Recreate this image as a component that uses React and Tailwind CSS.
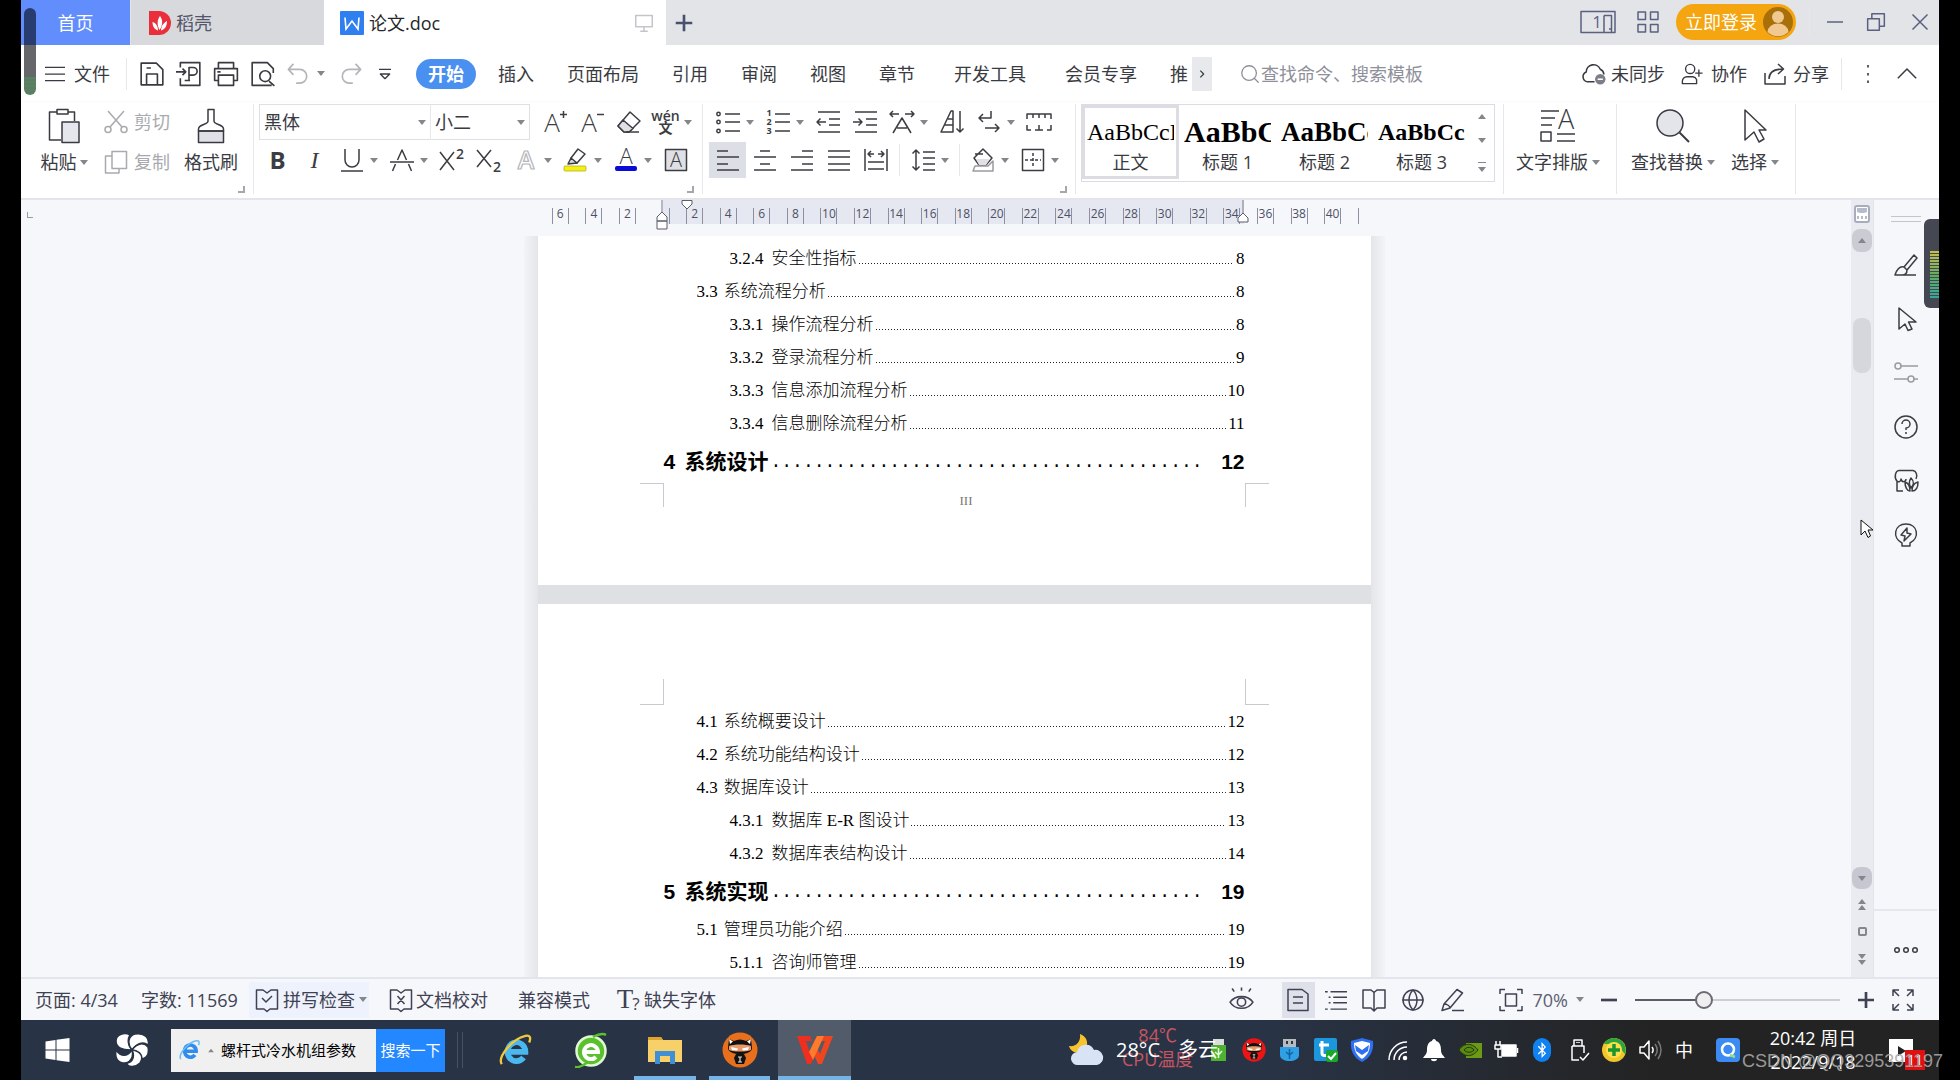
import { Globe, Search } from "lucide-react";
import { FaBluetoothB } from "react-icons/fa";

const menuTabs = [
  { label: "插入" },
  { label: "页面布局" },
  { label: "引用" },
  { label: "审阅" },
  { label: "视图" },
  { label: "章节" },
  { label: "开发工具", wide: true },
  { label: "会员专享", wide: true },
];

const pageOne = [
  { level: 3, no: "3.2.4", title: "安全性指标", page: "8" },
  { level: 2, no: "3.3", title: "系统流程分析", page: "8" },
  { level: 3, no: "3.3.1", title: "操作流程分析", page: "8" },
  { level: 3, no: "3.3.2", title: "登录流程分析", page: "9" },
  { level: 3, no: "3.3.3", title: "信息添加流程分析", page: "10" },
  { level: 3, no: "3.3.4", title: "信息删除流程分析", page: "11" },
  { level: 1, no: "4", title: "系统设计", page: "12" },
];

const pageTwo = [
  { level: 2, no: "4.1", title: "系统概要设计", page: "12" },
  { level: 2, no: "4.2", title: "系统功能结构设计", page: "12" },
  { level: 2, no: "4.3", title: "数据库设计", page: "13" },
  { level: 3, no: "4.3.1", title: "数据库 E-R 图设计", page: "13" },
  { level: 3, no: "4.3.2", title: "数据库表结构设计", page: "14" },
  { level: 1, no: "5", title: "系统实现", page: "19" },
  { level: 2, no: "5.1", title: "管理员功能介绍", page: "19" },
  { level: 3, no: "5.1.1", title: "咨询师管理", page: "19" },
];

const rulerMarks = [6, 4, 2, 0, 2, 4, 6, 8, 10, 12, 14, 16, 18, 20, 22, 24, 26, 28, 30, 32, 34, 36, 38, 40];

const styleItems = [
  { name: "正文", sample: "AaBbCcD", look: "text-2xl", active: true },
  { name: "标题 1", sample: "AaBbC", look: "text-[30px] font-bold" },
  { name: "标题 2", sample: "AaBbCc", look: "text-[27px] font-bold" },
  { name: "标题 3", sample: "AaBbCcD", look: "text-2xl font-bold" },
];

function Svg({ className = "w-6 h-6", box = "0 0 24 24", children }) {
  return (
    <svg
      viewBox={box}
      className={`shrink-0 overflow-visible ${className}`}
      fill="none"
      stroke="currentColor"
      strokeWidth="1.5"
      strokeLinejoin="round"
      aria-hidden="true"
    >
      {children}
    </svg>
  );
}

function Glyph({ x = 12, y = 20, size = 22, children, ...rest }) {
  return (
    <text
      x={x}
      y={y}
      fontSize={size}
      textAnchor="middle"
      fill="currentColor"
      stroke="none"
      fontFamily="Open Sans, sans-serif"
      fontWeight="300"
      {...rest}
    >
      {children}
    </text>
  );
}

function Caret({ up = false, className = "" }) {
  return (
    <svg viewBox="0 0 8 5" className={`w-2 h-[5px] shrink-0 fill-[#85868c] ${className}`} aria-hidden="true">
      <path d={up ? "M0 5L4 0L8 5Z" : "M0 0H8L4 5Z"} />
    </svg>
  );
}

function Tool({ label, caret, active, dim, children }) {
  return (
    <div className={`flex items-center h-9 ${dim ? "text-[#a9aaae]" : "text-[#3c3d42]"}`}>
      <button aria-label={label} className={`w-[37px] h-9 flex items-center justify-center ${active ? "bg-[#dcdfe6]" : ""}`}>
        {children}
      </button>
      {caret && (
        <span className="w-[13px] flex justify-start">
          <Caret />
        </span>
      )}
    </div>
  );
}

function Sep({ className = "h-8" }) {
  return <span className={`w-px bg-[#e6e7ea] shrink-0 ${className}`} />;
}

function Corner() {
  return <span className="self-end mb-[5px] w-[7px] h-[7px] border-r-2 border-b-2 border-[#a5a7ad] shrink-0" />;
}

function TitleBar() {
  return (
    <header className="h-[45px] shrink-0 bg-[#e2e4e8] flex items-stretch">
      <button className="w-[109px] bg-[#628dfc] text-white text-lg">首页</button>
      <button className="w-[193px] ml-px bg-[#d8d9dd] flex items-center gap-[5px] pl-[18px] text-lg text-[#53556b]">
        <svg viewBox="0 0 22 24" className="w-[22px] h-6" aria-hidden="true">
          <path d="M0 0H10A12 12 0 0 1 10 24H0Z" fill="#ea2e3c" />
          <path
            d="M11 5C14 9 14 14 10.500 19C8 14 8 9 11 5ZM3.500 11C7 12 9 15 9 19.500C5.500 18.500 3.500 15 3.500 11ZM18 10C18 15 16 18.500 12 19.500C12 15 14.500 12 18 10Z"
            fill="#fff"
          />
        </svg>
        稻壳
      </button>
      <button className="w-[342px] bg-white flex items-center pl-4 text-lg text-[#26272b]">
        <svg viewBox="0 0 24 24" className="w-6 h-6 mr-[5px]" aria-hidden="true">
          <rect width="24" height="24" rx="1" fill="#2f7ff0" />
          <path d="M5 6.500L6 18L12 10L18 18L19 6.500" fill="none" stroke="#fff" strokeWidth="1.600" />
        </svg>
        论文.doc
        <Svg className="w-[18px] h-[18px] ml-auto mr-[13px] text-[#c3c5ca]">
          <path d="M1 2H23V17H1ZM12 17V22M7 23H17" strokeWidth="2" />
        </Svg>
      </button>
      <button aria-label="新建标签" className="w-[35px] flex items-center justify-center text-[#47506d]">
        <Svg className="w-[18px] h-[18px]">
          <path d="M12 1V23M1 12H23" strokeWidth="3.500" />
        </Svg>
      </button>

      <div className="ml-auto flex items-center text-[#5b6080] pr-[10px] pb-[2px]">
        <button aria-label="工作区" className="mr-5">
          <Svg box="0 0 36 24" className="w-9 h-6">
            <path d="M1 1.500H35V22.500H1ZM24 5.500H31.500V22M24 5.500V22.500M29 19H31" />
            <Glyph x={17} y={18} size={16} fontWeight="400">1</Glyph>
          </Svg>
        </button>
        <button aria-label="应用" className="mr-4">
          <Svg className="w-6 h-6">
            <path d="M2 2H9.500V9.500H2ZM14.500 2H22V9.500H14.500ZM2 14.500H9.500V22H2ZM14.500 14.500H22V22H14.500Z" />
          </Svg>
        </button>
        <button className="h-9 w-[120px] rounded-full bg-[#f4a50f] text-white text-lg flex items-center justify-between pl-[9px] pr-[3px]">
          立即登录
          <svg viewBox="0 0 30 30" className="w-[30px] h-[30px]" aria-hidden="true">
            <circle cx="15" cy="15" r="15" fill="#a96f08" />
            <circle cx="15" cy="10" r="6" fill="#f0c890" />
            <path d="M4.500 25A10.500 8.500 0 0 1 25.500 25A15 15 0 0 1 4.500 25Z" fill="#f0c890" />
          </svg>
        </button>
        <Sep className="h-7 ml-[13px] mr-[17px] bg-[#d2d4da]" />
        <button aria-label="最小化" className="w-4 mr-[23px]">
          <Svg className="w-4 h-4"><path d="M0 12H24" strokeWidth="2.200" /></Svg>
        </button>
        <button aria-label="还原" className="mr-[25px]">
          <Svg className="w-5 h-5"><path d="M2 8H16V22H2ZM7 8V2H22V17H16" strokeWidth="1.800" /></Svg>
        </button>
        <button aria-label="关闭">
          <Svg className="w-[18px] h-[18px]"><path d="M2 2L22 22M22 2L2 22" strokeWidth="2" /></Svg>
        </button>
      </div>
    </header>
  );
}

function MenuBar() {
  return (
    <nav className="h-[57px] shrink-0 flex items-center text-lg text-[#3a3b42] pl-[23px] pr-[22px] whitespace-nowrap">
      <button className="flex items-center gap-2">
        <Svg className="w-[22px] h-5"><path d="M0 4H24M0 12H24M0 20H24" /></Svg>
        文件
      </button>
      <Sep className="ml-4 mr-3 h-8" />
      <div className="flex items-center gap-[11px]">
        <button aria-label="保存">
          <Svg className="w-[26px] h-[26px]">
            <path d="M2 2H16L22 8V22H2ZM7 22V12H17V22M7 6.500H11" />
          </Svg>
        </button>
        <button aria-label="输出为PDF">
          <Svg className="w-[26px] h-[26px]">
            <path d="M4 6V1.500H22V22.500H4V16M0 10H9M6 7L9 10L6 13M12 18V6H16A3.500 3.500 0 0 1 16 13H12M8 18H13" />
          </Svg>
        </button>
        <button aria-label="打印">
          <Svg className="w-[26px] h-[26px]">
            <path d="M5 7V1.500H19V7M5 18H1.500V7H22.500V18H19M5 13H19V22.500H5ZM4 10H7" />
          </Svg>
        </button>
        <button aria-label="打印预览">
          <Svg className="w-[26px] h-[26px]">
            <path d="M20 22.500H2V1.500H16L21.500 7V11M17.500 18.500L22.500 23" />
            <circle cx="14" cy="14" r="5" />
          </Svg>
        </button>
        <button aria-label="撤销" className="flex items-center gap-2 text-[#b4b5ba]">
          <Svg className="w-[22px] h-[22px]"><path d="M7 1L1.500 7L7 13M1.500 7H14A7.500 7.500 0 0 1 14 22H10" strokeWidth="1.800" /></Svg>
          <Caret />
        </button>
        <button aria-label="恢复" className="text-[#b4b5ba] ml-1">
          <Svg className="w-[22px] h-[22px]"><path d="M17 1L22.500 7L17 13M22.500 7H10A7.500 7.500 0 0 0 10 22H14" strokeWidth="1.800" /></Svg>
        </button>
        <button aria-label="自定义快速访问工具栏" className="ml-1">
          <Svg className="w-4 h-4"><path d="M3 5H21M5 12L12 19L19 12Z" strokeWidth="2" /></Svg>
        </button>
      </div>
      <button className="ml-[23px] mr-[22px] h-[30px] w-[60px] rounded-full bg-[#4a90f0] text-white font-bold">开始</button>
      <div className="flex items-center gap-[33px]">
        {menuTabs.map((tab) => (
          <button key={tab.label} className={tab.wide ? "ml-[6px]" : ""}>
            {tab.label}
          </button>
        ))}
        <div className="flex items-center">
          <span className="w-[22px]">推</span>
          <button aria-label="更多选项卡" className="w-5 h-[34px] bg-[#e8e9ec] flex items-center justify-center shrink-0">
            <Svg className="w-[10px] h-[10px]"><path d="M8 4L16 12L8 20" strokeWidth="3" /></Svg>
          </button>
        </div>
      </div>
      <label className="flex items-center ml-[27px] text-[#8e909a]">
        <Search className="w-[22px] h-[22px]" strokeWidth={1.4} />
        <input
          aria-label="查找命令"
          placeholder="查找命令、搜索模板"
          className="w-[200px] outline-none placeholder:text-[#8e909a]"
        />
      </label>
      <div className="ml-auto flex items-center">
        <button className="flex items-center gap-[5px] mr-4">
          <Svg className="w-[25px] h-[25px]">
            <path d="M13 20H6A5 5 0 0 1 5 10.500A7 7 0 0 1 18.500 8A6 6 0 0 1 22 13" />
            <circle cx="18.500" cy="17.500" r="5" fill="#7d7f88" stroke="none" />
            <path d="M16 17.500H21" stroke="#fff" />
          </Svg>
          未同步
        </button>
        <button className="flex items-center gap-2 mr-4">
          <Svg className="w-[22px] h-[22px]">
            <circle cx="10" cy="6.500" r="5" />
            <path d="M17 22.500H1.500V20A5 5 0 0 1 6.500 15H13A5 5 0 0 1 17 18ZM19.500 7V15M15.500 11H23.500" />
          </Svg>
          协作
        </button>
        <button className="flex items-center gap-[6px]">
          <Svg className="w-6 h-6">
            <path d="M2 11V22H22V14M6 17C6 10 11 7 20 7M15 2L20.500 7L15 12" />
          </Svg>
          分享
        </button>
        <Sep className="ml-3 h-8" />
        <button aria-label="更多" className="ml-6">
          <svg viewBox="0 0 4 18" className="w-1 h-[18px] fill-[#5b5d66]" aria-hidden="true">
            <path d="M1 0H3V2.500H1ZM1 8H3V10.500H1ZM1 15.500H3V18H1Z" />
          </svg>
        </button>
        <button aria-label="折叠功能区" className="ml-[27px]">
          <Svg className="w-5 h-5"><path d="M1 17L12 6L23 17" strokeWidth="1.800" /></Svg>
        </button>
      </div>
    </nav>
  );
}

function ParagraphGroup() {
  return (
    <section className="flex flex-col gap-[2px] pl-[6px]">
      <div className="flex">
        <Tool label="项目符号" caret>
          <Svg className="w-6 h-6">
            <circle cx="2.500" cy="4" r="1.700" /><circle cx="2.500" cy="12" r="1.700" /><circle cx="2.500" cy="21" r="1.700" />
            <path d="M9 4H24M9 12H24M9 21H24" />
          </Svg>
        </Tool>
        <Tool label="编号" caret>
          <Svg className="w-6 h-6">
            <path d="M9 4H24M9 12H24M9 21H24" />
            <Glyph x={3} y={6} size={9} fontWeight="700">1</Glyph>
            <Glyph x={3} y={15} size={9} fontWeight="700">2</Glyph>
            <Glyph x={3} y={24} size={9} fontWeight="700">3</Glyph>
          </Svg>
        </Tool>
        <Tool label="减少缩进量">
          <Svg><path d="M2 2H24M13 9H24M13 15H24M2 22H24M10 12H1M4.500 8.500L1 12L4.500 15.500" /></Svg>
        </Tool>
        <Tool label="增加缩进量">
          <Svg><path d="M2 2H24M13 9H24M13 15H24M2 22H24M0 12H9M5.500 8.500L9 12L5.500 15.500" /></Svg>
        </Tool>
        <Tool label="字符缩放" caret>
          <Svg><path d="M0 4H9M3 1L0 4L3 7M15 4H24M21 1L24 4L21 7M3 23L12 8L21 23M7 18H17" /></Svg>
        </Tool>
        <Tool label="排序">
          <Svg><path d="M13 1V22H1L11 1ZM8 9H13M5 15H13M20 1V22M16.500 18.500L20 22L23.500 18.500" /></Svg>
        </Tool>
        <Tool label="段落标记" caret>
          <Svg><path d="M14 1V8H2M6 4L2 8L6 12M8 18H22M18 14L22 18L18 22" /></Svg>
        </Tool>
        <Tool label="制表位">
          <Svg className="w-7 h-6" box="0 0 28 24"><path d="M2 9V4H26V9M8 4V8M14 4V8M20 4V8M2 15V20H6M26 15V20H22M10 20H18M14 15V20" /></Svg>
        </Tool>
      </div>
      <div className="flex items-center">
        <Tool label="左对齐" active>
          <Svg><path d="M1 3H12M1 9H23M1 16H12M1 22H23" /></Svg>
        </Tool>
        <Tool label="居中对齐">
          <Svg><path d="M7 3H17M1 9H23M7 16H17M1 22H23" /></Svg>
        </Tool>
        <Tool label="右对齐">
          <Svg><path d="M12 3H23M1 9H23M12 16H23M1 22H23" /></Svg>
        </Tool>
        <Tool label="两端对齐">
          <Svg><path d="M1 3H23M1 9H23M1 16H23M1 22H23" /></Svg>
        </Tool>
        <Tool label="分散对齐">
          <Svg><path d="M1 1V23M23 1V23M4 6H10M7 3L4 6L7 9M14 6H20M17 3L20 6L17 9M4 14H20M4 21H20" /></Svg>
        </Tool>
        <div className="w-[10px] flex justify-center"><Sep /></div>
        <Tool label="行距" caret>
          <Svg><path d="M5 2V22M1.500 5.500L5 2L8.500 5.500M1.500 18.500L5 22L8.500 18.500M12 4H24M12 10H24M12 16H24M12 22H24" /></Svg>
        </Tool>
        <div className="w-[10px] flex justify-center"><Sep /></div>
        <Tool label="底纹颜色" caret>
          <Svg><path d="M12 1L21 10L15 17H8L3 10ZM4 6H12" /><path d="M5 11L19 11L15 17H8Z" fill="#e4dfe2" stroke="none" /><path d="M4 18H17L22 13V23H2Z" stroke="#9a9ba0" /></Svg>
        </Tool>
        <Tool label="边框" caret>
          <Svg><path d="M1.500 1.500H22.500V22.500H1.500Z" /><path d="M12 5V20M4 12H20" strokeDasharray="3 2" /></Svg>
        </Tool>
      </div>
    </section>
  );
}

function Ribbon() {
  return (
    <div className="h-[98px] shrink-0 flex items-start text-lg text-[#3a3b42] border-b-2 border-[#e4e5ea] pt-[2px] whitespace-nowrap shadow-sm">
      <section className="flex pl-[19px] h-full">
        <button className="flex flex-col items-center pt-1 w-[48px]">
          <Svg className="w-8 h-9" box="0 0 32 36">
            <path d="M9 4H1.500V32H13M20 4H26.500V13M9 1.500H20V6H9Z" />
            <path d="M14 14H31V34.500H14Z" fill="#e6e7ec" />
          </Svg>
          <span className="flex items-center gap-[3px] mt-1 leading-7">粘贴<Caret /></span>
        </button>
        <div className="flex flex-col gap-1 pl-4 text-[#a9aaae]">
          <button className="flex items-center gap-[6px] h-9">
            <Svg className="w-6 h-6">
              <path d="M4 1L18 17M20 1L6 17" />
              <circle cx="4" cy="19.500" r="3" /><circle cx="20" cy="19.500" r="3" />
            </Svg>
            剪切
          </button>
          <button className="flex items-center gap-[6px] h-9">
            <Svg className="w-6 h-6">
              <path d="M8 6H1.500V23H15V19" /><path d="M8 1.500H22.500V18.500H8Z" />
            </Svg>
            复制
          </button>
        </div>
        <button className="flex flex-col items-center pt-1 ml-[14px]">
          <Svg className="w-7 h-9" box="0 0 28 36">
            <path d="M1.500 23H26.500V34.500H1.500Z" fill="#e0e1e6" />
            <path d="M11 1.500H17V13C17 17 26.500 16 26.500 21V23H1.500V21C1.500 16 11 17 11 13Z" />
          </Svg>
          <span className="mt-1 leading-7">格式刷</span>
        </button>
        <Corner />
      </section>
      <Sep className="h-[90px] ml-2" />

      <section className="flex flex-col gap-[2px] pl-[5px]">
        <div className="flex items-center">
          <div className="flex border border-[#dfe0e4] w-[271px] h-9 items-center mr-[6px]">
            <select aria-label="字体" className="appearance-none w-[164px] pl-1 outline-none">
              <option>黑体</option>
            </select>
            <Caret className="-ml-[6px] mr-[4px]" />
            <Sep className="h-9" />
            <select aria-label="字号" className="appearance-none w-[88px] pl-[4px] outline-none">
              <option>小二</option>
            </select>
            <Caret className="-ml-[2px]" />
          </div>
          <Tool label="增大字号">
            <Svg><Glyph x={9} y={22} size={26}>A</Glyph><path d="M17 4.500H24M20.500 1V8" /></Svg>
          </Tool>
          <Tool label="减小字号">
            <Svg><Glyph x={9} y={22} size={26}>A</Glyph><path d="M17 4.500H24" /></Svg>
          </Tool>
          <Tool label="清除格式">
            <Svg><path d="M13 2L23 11L12 22H7L1 16Z" /><path d="M6 10L16 18.500L12 22H7L1 16Z" fill="#dfe0e4" /><path d="M9 22H22" /></Svg>
          </Tool>
          <Tool label="拼音指南" caret>
            <span className="flex flex-col items-center leading-3 font-semibold">
              <span className="text-sm leading-3">wén</span>
              <span className="text-sm leading-3">文</span>
            </span>
          </Tool>
        </div>
        <div className="flex items-center">
          <Tool label="加粗"><span className="text-2xl font-bold">B</span></Tool>
          <Tool label="倾斜"><span className="font-['Liberation_Serif'] italic text-2xl">I</span></Tool>
          <Tool label="下划线" caret>
            <Svg><path d="M5 1V12A7 7 0 0 0 19 12V1M1 23H23" /></Svg>
          </Tool>
          <Tool label="删除线" caret>
            <Svg><path d="M7.500 12L12 2L16.500 12M5.500 16L2.500 23M18.500 16L21.500 23M0 14H24" /></Svg>
          </Tool>
          <Tool label="上标">
            <Svg><path d="M0 4L14 22M14 4L0 22" /><Glyph x={20} y={11} size={14} fontWeight="600">2</Glyph></Svg>
          </Tool>
          <Tool label="下标">
            <Svg><path d="M0 2L14 19M14 2L0 19" /><Glyph x={20} y={24} size={14} fontWeight="600">2</Glyph></Svg>
          </Tool>
          <Tool label="文字效果" caret dim>
            <Svg><Glyph size={25} y={21} fill="#fff" stroke="#b4b5ba" strokeWidth="1.200" fontWeight="600">A</Glyph></Svg>
          </Tool>
          <Tool label="突出显示" caret>
            <Svg className="w-[26px] h-6"><path d="M14 1L21 6L13 15H7V10Z" /><path d="M7 10L13 15L4 16Z" fill="#d8d9de" /><rect y="18" width="22" height="5" rx="1" fill="#f4f014" stroke="#aaa814" strokeWidth="0.700" /></Svg>
          </Tool>
          <Tool label="字体颜色" caret>
            <Svg><Glyph size={22} y={16}>A</Glyph><rect x="1" y="18" width="22" height="5" rx="2" fill="#0b0bd8" stroke="none" /></Svg>
          </Tool>
          <Tool label="字符底纹">
            <Svg><path d="M1.500 1.500H22.500V22.500H1.500Z" fill="#dfe0e5" /><Glyph size={20} y={19}>A</Glyph></Svg>
          </Tool>
        </div>
      </section>
      <div className="flex h-full -ml-[10px]"><Corner /></div>
      <Sep className="h-[90px] ml-2" />

      <ParagraphGroup />
      <div className="flex h-full -ml-1"><Corner /></div>
      <Sep className="h-[90px] ml-2" />

      <section className="ml-[5px] flex border border-[#dcdde2] h-[78px]">
        {styleItems.map((item) => (
          <button
            key={item.name}
            className={`w-[97px] h-[74px] flex flex-col items-center justify-end px-[2px] overflow-hidden ${
              item.active ? "border-[3px] border-[#dcdde2]" : "border-[3px] border-transparent"
            }`}
          >
            <span className={`w-full h-8 leading-8 overflow-hidden text-left font-['Liberation_Serif'] text-black ${item.look}`}>
              {item.sample}
            </span>
            <span className="leading-7">{item.name}</span>
          </button>
        ))}
        <div className="w-6 flex flex-col items-center justify-around">
          <button aria-label="上一行样式"><Caret up /></button>
          <button aria-label="下一行样式"><Caret /></button>
          <button aria-label="更多样式" className="flex flex-col items-center gap-1">
            <span className="w-2 h-px bg-[#85868c]" />
            <Caret />
          </button>
        </div>
      </section>
      <Sep className="h-[90px] ml-2" />

      <button className="flex flex-col items-center pt-1 ml-3">
        <Svg className="w-9 h-9" box="0 0 36 36">
          <path d="M1 3H19M1 10H15M1 17H12M1 24H11V33H1ZM17 26H35M17 33H35" />
          <Glyph x={26} y={21} size={27}>A</Glyph>
        </Svg>
        <span className="flex items-center gap-1 mt-1 leading-7">文字排版<Caret /></span>
      </button>
      <Sep className="h-[90px] ml-4" />
      <button className="flex flex-col items-center pt-1 ml-[14px]">
        <Svg className="w-9 h-9" box="0 0 36 36">
          <circle cx="15" cy="15" r="13" fill="#e4e5ea" />
          <path d="M24.500 24.500L34 34" strokeWidth="2" />
        </Svg>
        <span className="flex items-center gap-1 mt-1 leading-7">查找替换<Caret /></span>
      </button>
      <button className="flex flex-col items-center pt-1 ml-4">
        <Svg className="w-8 h-9" box="0 0 32 36">
          <path d="M6 2L27 22H20L25 31L20 34L15 24L6 32Z" />
        </Svg>
        <span className="flex items-center gap-1 mt-1 leading-7">选择<Caret /></span>
      </button>
      <Sep className="h-[90px] ml-4" />
    </div>
  );
}

function TocLine({ level, no, title, page }) {
  if (level === 1) {
    return (
      <li className="h-[43px] flex items-center text-[21px] font-bold">
        <a href="#toc" className="flex items-center w-full">
          <span className="w-[21px] font-['Liberation_Sans']">{no}</span>
          <span>{title}</span>
          <span className="flex-1 w-0 overflow-hidden whitespace-nowrap ml-[2px] mr-3 font-['Liberation_Mono'] text-lg leading-7 font-normal">
            {".".repeat(40)}
          </span>
          <span className="font-['Liberation_Sans']">{page}</span>
        </a>
      </li>
    );
  }
  return (
    <li className={`h-[33px] flex items-center ${level === 2 ? "pl-[33px]" : "pl-[66px]"}`}>
      <a href="#toc" className={`flex items-center w-full ${level === 2 ? "gap-[6px]" : "gap-2"}`}>
        <span>{no}</span>
        <span className="flex-1 flex items-center">
          <span className="mr-[2px]">{title}</span>
          <span className="flex-1 h-[11px]">
            <span className="block h-full bg-[repeating-linear-gradient(to_right,#222_0px,#222_1px,transparent_1px,transparent_3px)] bg-no-repeat bg-bottom bg-[length:100%_1px]" />
          </span>
          <span className="ml-[2px]">{page}</span>
        </span>
      </a>
    </li>
  );
}

function Toc({ items }) {
  return (
    <ul className="mx-[126px] font-['Liberation_Serif','Noto_Sans_CJK_SC',serif] font-light text-[17px] leading-7 text-black">
      {items.map((item) => (
        <TocLine key={item.no} {...item} />
      ))}
    </ul>
  );
}

function Ruler() {
  return (
    <div className="relative h-[36px] shrink-0 w-[861px] text-xs text-[#4d5063]">
      <div className="absolute left-[139px] w-[581px] top-0 h-6 bg-[#e6e8f1]" />
      <div className="relative flex h-6 items-end ml-5">
        <div className="flex w-[806px]">
          {rulerMarks.map((mark, i) => (
            <span key={i} className="flex-1 flex justify-center">
              <span
                className={`w-[17px] h-4 leading-3 border-[#8d90a0] flex justify-center ${mark === 0 ? "border-r" : "border-x"}`}
              >
                {mark === 0 ? "" : mark}
              </span>
            </span>
          ))}
        </div>
        <span className="ml-2 w-px h-4 bg-[#8d90a0]" />
      </div>
      <svg viewBox="0 0 12 30" className="absolute left-[132px] top-0 w-3 h-[30px]" aria-hidden="true">
        <path d="M6 0V15" stroke="#77798a" />
        <path d="M1 21V17L6 12L11 17V21ZM1 21H11V29H1Z" fill="#fff" stroke="#5b5d6a" />
      </svg>
      <svg viewBox="0 0 12 10" className="absolute left-[157px] top-0 w-3 h-[10px]" aria-hidden="true">
        <path d="M1 0.500H11V4L6 9L1 4Z" fill="#fff" stroke="#5b5d6a" />
      </svg>
      <svg viewBox="0 0 12 24" className="absolute left-[713px] top-0 w-3 h-6" aria-hidden="true">
        <path d="M6 0V15" stroke="#77798a" />
        <path d="M1 22V18L6 13L11 18V22Z" fill="#fff" stroke="#5b5d6a" />
      </svg>
    </div>
  );
}

function Document() {
  return (
    <main className="flex-1 flex flex-col items-center min-h-0 overflow-hidden pl-9 relative">
      <span className="absolute left-[6px] top-3 w-[6px] h-[6px] border-l border-b border-[#9a9ca5]" />
      <Ruler />
      <div className="w-[861px] bg-[linear-gradient(to_right,#f3f4f7_0px,#e3e5e9_14px,#e3e5e9_847px,#f3f4f7_861px)] px-[14px] flex-1 min-h-0 overflow-hidden">
        <article className="bg-white pt-[6px] h-[349px]">
          <Toc items={pageOne} />
          <div className="flex justify-between mx-[102px]">
            <span className="w-6 h-6 border-t border-r border-[#c9cacf]" />
            <span className="ml-6 text-[13px] leading-9 font-['Liberation_Serif'] text-[#777]">III</span>
            <span className="w-6 h-6 border-t border-l border-[#c9cacf]" />
          </div>
        </article>
        <div className="h-[19px] bg-[#dfe0e4]" />
        <article className="bg-white pt-[75px] h-[600px]">
          <div className="flex justify-between mx-[102px]">
            <span className="w-6 h-[26px] border-b border-r border-[#c9cacf]" />
            <span className="w-6 h-[26px] border-b border-l border-[#c9cacf]" />
          </div>
          <Toc items={pageTwo} />
        </article>
      </div>
    </main>
  );
}

function ScrollBar() {
  return (
    <div className="w-[22px] shrink-0 bg-[#eaebf0] flex flex-col items-center pt-[5px]">
      <button aria-label="标尺" className="w-full h-[18px] flex justify-center">
        <svg viewBox="0 0 16 18" className="w-4 h-[18px]" aria-hidden="true">
          <rect x="1" y="1" width="14" height="16" rx="2" fill="#fff" stroke="#a9acbb" strokeWidth="2" />
          <path d="M3 3H13V7L10 8H6L3 7ZM3 11H5V14H3ZM7 11H9V14H7ZM11 11H13V14H11Z" fill="#b4bccb" />
        </svg>
      </button>
      <button aria-label="向上滚动" className="mt-[6px] w-5 h-[23px] rounded-lg bg-[#cbccd3] flex items-center justify-center">
        <Caret up />
      </button>
      <div className="mt-[66px] w-[18px] h-[55px] rounded-lg bg-[#d6d7dc]" />
      <button aria-label="向下滚动" className="mt-auto w-5 h-[22px] rounded-lg bg-[#c6c7d0] flex items-center justify-center">
        <Caret />
      </button>
      <button aria-label="上一页" className="mt-[10px] flex flex-col gap-px"><Caret up /><Caret up /></button>
      <button aria-label="选择浏览对象" className="mt-[17px] w-[9px] h-[9px] rounded-xs border-2 border-[#85868c]" />
      <button aria-label="下一页" className="mt-[18px] mb-3 flex flex-col gap-px"><Caret /><Caret /></button>
    </div>
  );
}

function SideBar() {
  return (
    <aside className="relative w-[66px] shrink-0 flex flex-col items-center text-[#3c3d42] border-l border-[#e4e5ea] pr-[2px]">
      <div className="mt-4 w-[30px] h-[6px] border-y border-[#c4c5ca] shrink-0" />
      <div className="flex flex-col gap-[30px] mt-[31px]">
        <button aria-label="样式">
          <Svg><path d="M10 14L20 2L23 5L13 17M10 14C6 13 3 16 1 22H22M10 14L13 17C13 20 11 22 8 22" /></Svg>
        </button>
        <button aria-label="选择窗格">
          <Svg><path d="M5 1L22 15H14.500L18 22L14 23.500L11 17L5 22Z" /></Svg>
        </button>
        <button aria-label="属性" className="text-[#9a9ba0]">
          <Svg><circle cx="4" cy="5" r="3" /><circle cx="17" cy="18" r="3" /><path d="M7 5H24M0 18H14M20 18H24" /></Svg>
        </button>
        <button aria-label="帮助">
          <Svg><circle cx="12" cy="12" r="11" /><path d="M8 9A4 4 0 1 1 12 13V15M12 17V19" /></Svg>
        </button>
        <button aria-label="模板">
          <Svg>
            <path d="M9 22H3V12M3 12C0 9 1 2 5 1.500H19C22 2 24 6 22 10M3 12C5 14 7 12 7 10C8 14 12 13 12 10" />
            <path d="M17 9C20 12 20 16 17 19C15 16 15 12 17 9ZM11 13C14 14 16 17 16 22C13 22 11 18 11 13ZM24 13C24 18 22 22 18 22C18 17 20 14 24 13Z" />
          </Svg>
        </button>
        <button aria-label="智能助手">
          <Svg><path d="M8 23V20C-2 15 0 1 12 1C24 1 26 15 16 20V23ZM13 5L7 12L11 13L10 18L17 11L13 10Z" /></Svg>
        </button>
      </div>
      <div className="mt-auto w-full border-t-2 border-[#e6e7ec] h-[68px] flex justify-center items-center pb-[5px] pt-4">
        <button aria-label="更多工具">
          <Svg className="w-6 h-2" box="0 0 24 8">
            <circle cx="3" cy="4" r="2.300" /><circle cx="12" cy="4" r="2.300" /><circle cx="21" cy="4" r="2.300" />
          </Svg>
        </button>
      </div>
      <div className="absolute right-0 top-[19px] w-[15px] h-[89px] rounded-l-md bg-[#454753] pt-8 pl-[6px] pb-[9px]">
        <div className="h-full bg-linear-to-b from-[#c9c04a] via-[#5fae5c] to-[#2fa79c]">
          <div className="h-full bg-[repeating-linear-gradient(to_bottom,transparent_0px,transparent_2px,#454753_2px,#454753_3px)]" />
        </div>
      </div>
    </aside>
  );
}

function StatusBar() {
  return (
    <footer className="h-[43px] shrink-0 border-t-2 border-[#e4e5ec] bg-[#f6f7fb] flex items-center text-lg text-[#3f4252] pl-[14px] pr-6 whitespace-nowrap">
      <span className="w-[106px]">页面: 4/34</span>
      <span className="w-[108px]">字数: 11569</span>
      <button className="flex items-center gap-1 bg-[#edf2fc] h-9 px-[6px] w-[120px]">
        <Svg><path d="M9 21H1.500V2H8L12 5L16 2H22.500V21H15L12 23.500ZM7 10L11 14L17 8" /></Svg>
        拼写检查
        <Caret />
      </button>
      <button className="flex items-center gap-[3px] ml-[20px] w-[129px]">
        <Svg><path d="M9 21H1.500V2H8L12 5L16 2H22.500V21H15L12 23.500ZM8.500 8L15.500 16M15.500 8L8.500 16" /></Svg>
        文档校对
      </button>
      <span className="w-[98px]">兼容模式</span>
      <button className="flex items-center gap-1">
        <Svg>
          <Glyph x={9} y={20} size={27} fontFamily="Liberation Serif" fontWeight="400">T</Glyph>
          <Glyph x={20} y={22} size={17} fontWeight="400">?</Glyph>
        </Svg>
        缺失字体
      </button>

      <div className="ml-auto flex items-center">
        <button aria-label="护眼模式" className="mr-7">
          <Svg className="w-[25px] h-[26px]">
            <path d="M1 14C6 7 18 7 23 14C18 22 6 22 1 14ZM12 0V3M3 1L5 4M21 1L19 4" /><circle cx="12" cy="14" r="4" />
          </Svg>
        </button>
        <button aria-label="页面视图" className="w-[33px] h-9 bg-[#dee1ea] flex items-center justify-center mr-[10px]">
          <Svg><path d="M2 1.500H16L22 6V22.500H2ZM7 9H17M7 15H17" /></Svg>
        </button>
        <button aria-label="大纲" className="mr-[15px]">
          <Svg className="w-[22px] h-6"><path d="M6 3H24M9 9H24M9 15H24M6 22H24M0 3H3M4 9H6M4 15H6M0 22H3" /></Svg>
        </button>
        <button aria-label="阅读版式" className="mr-[15px]">
          <Svg><path d="M1 2H9L12 4.500L15 2H23V20H15L12 23L9 20H1ZM12 4.500V22" /></Svg>
        </button>
        <button aria-label="Web版式" className="mr-[15px]">
          <Globe className="w-6 h-6" strokeWidth={1.5} />
        </button>
        <button aria-label="写作模式" className="mr-[35px]">
          <Svg><path d="M17 1.500L22.500 5L10 20L2 22.500L4 16ZM4 16C7 16 10 18 10 20M12 22.500H24" /></Svg>
        </button>
        <button aria-label="适合页面" className="mr-[10px]">
          <Svg><path d="M1 6V1.500H6M18 1.500H23V6M23 18V22.500H18M6 22.500H1V18M6.500 6H17.500V18H6.500Z" /></Svg>
        </button>
        <button className="flex items-center gap-2 mr-[17px] text-[#5d6070]">
          70%
          <Caret />
        </button>
        <button aria-label="缩小">
          <Svg className="w-4 h-4"><path d="M0 12H24" strokeWidth="4" /></Svg>
        </button>
        <input
          type="range"
          aria-label="缩放比例"
          defaultValue={32}
          className="appearance-none w-[205px] h-5 mx-[18px] bg-no-repeat bg-center bg-[length:100%_2px] bg-[linear-gradient(to_right,#5b5d66_33%,#cdced4_33%)] [&::-webkit-slider-thumb]:appearance-none [&::-webkit-slider-thumb]:w-[18px] [&::-webkit-slider-thumb]:h-[18px] [&::-webkit-slider-thumb]:rounded-full [&::-webkit-slider-thumb]:bg-[#efeff0] [&::-webkit-slider-thumb]:border-2 [&::-webkit-slider-thumb]:border-solid [&::-webkit-slider-thumb]:border-[#6b6c72]"
        />
        <button aria-label="放大" className="mr-[17px]">
          <Svg className="w-4 h-4"><path d="M0 12H24M12 0V24" strokeWidth="4" /></Svg>
        </button>
        <button aria-label="全屏">
          <Svg><path d="M2 8V2H8M2 2L8 8M16 2H22V8M22 2L16 8M22 16V22H16M22 22L16 16M8 22H2V16M2 22L8 16" /></Svg>
        </button>
      </div>
    </footer>
  );
}

function Ninja({ className, back }) {
  return (
    <svg viewBox="0 0 36 36" className={className} aria-hidden="true">
      <circle cx="18" cy="18" r="17.500" fill={back} />
      <path d="M7 7L12 9C16 7 20 7 24 9L29 7L30 16C30 24 6 24 6 16Z" fill="#111" />
      <path d="M7 7L11 9.500L8 12ZM29 7L25 9.500L28 12Z" fill="#fff" />
      <path d="M7 14C12 12 24 12 29 14V18C24 20 12 20 7 18Z" fill="#e89a68" />
      <path d="M9 15L16 16.500L15 18.500L10 18ZM27 15L20 16.500L21 18.500L26 18Z" fill="#fff" />
      <path d="M14 22H22L24 26L22 32H14L12 26Z" fill="#111" />
      <path d="M16 25H20M18 25V30M16 30H20" stroke="#e8e0d8" strokeWidth="1.200" />
    </svg>
  );
}

function BrowserE({ className, color, ring }) {
  return (
    <svg viewBox="0 0 36 36" className={className} aria-hidden="true">
      <path d="M8 20H28A9.500 10 0 1 0 26 26" fill="none" stroke={color} strokeWidth="6" />
      <path d="M3 33C-2 26 14 6 28 3C33 2 34 5 32 10" fill="none" stroke={ring} strokeWidth="2.500" />
    </svg>
  );
}

function Tray() {
  return (
    <div className="flex items-center gap-3 text-white">
      <button aria-label="U盘">
        <svg viewBox="0 0 24 24" className="w-6 h-6" aria-hidden="true">
          <path d="M7 1H18V7H7Z" fill="#ddd" /><path d="M5 7H20V23H5Z" fill="#4fb233" />
          <path d="M12.500 20V10M9 14L12.500 17L16 13" stroke="#e4ffd8" strokeWidth="1.500" fill="none" />
        </svg>
      </button>
      <button aria-label="安全软件"><Ninja className="w-6 h-6" back="#ee1414" /></button>
      <button aria-label="USB设备">
        <svg viewBox="0 0 24 24" className="w-6 h-6" aria-hidden="true">
          <path d="M5 1H18V9H5Z" fill="#b8bcc2" /><path d="M8 3H10V6H8ZM13 3H15V6H13Z" fill="#333" />
          <path d="M2 9H21V17C21 25 2 25 2 17Z" fill="#2f9fe6" /><path d="M11.500 21V11M8 14L11.500 17L15 14" stroke="#11669e" fill="none" strokeWidth="1.500" />
        </svg>
      </button>
      <button aria-label="同步助手">
        <svg viewBox="0 0 24 24" className="w-6 h-6" aria-hidden="true">
          <rect width="23" height="23" rx="2" fill="#1b97dd" />
          <path d="M8 3V15C8 18 11 18 15 17M5 7H15" stroke="#fff" strokeWidth="3" fill="none" />
          <rect x="12" y="12" width="12" height="12" rx="2" fill="#19a72c" /><path d="M14 18L17 21L22 15" stroke="#fff" fill="none" strokeWidth="2" />
        </svg>
      </button>
      <button aria-label="电脑管家">
        <svg viewBox="0 0 24 24" className="w-6 h-6" aria-hidden="true">
          <path d="M12 0L23 3C24 13 20 20 12 24C4 20 0 13 1 3Z" fill="#2f6ff2" />
          <path d="M12 3L20 5C20 12 18 17 12 21C6 17 4 12 4 5Z" fill="#fff" /><path d="M5 7L12 12L19 7L18 13L12 17L6 13Z" fill="#2f6ff2" />
        </svg>
      </button>
      <button aria-label="网络">
        <Svg><path d="M3 22A18 18 0 0 1 21 4M8 22A13 13 0 0 1 21 9M13 22A8 8 0 0 1 21 14" /><circle cx="19" cy="20" r="1.500" fill="currentColor" /></Svg>
      </button>
      <button aria-label="通知">
        <svg viewBox="0 0 24 24" className="w-6 h-6 fill-white" aria-hidden="true">
          <path d="M12 1C13 1 14 2 14 3C18 4 19 8 19 12C19 16 21 17 23 20H1C3 17 5 16 5 12C5 8 6 4 10 3C10 2 11 1 12 1ZM9 21H15C15 24 9 24 9 21Z" />
        </svg>
      </button>
      <button aria-label="NVIDIA 设置">
        <svg viewBox="0 0 24 24" className="w-6 h-6" aria-hidden="true">
          <path d="M8 5H24V20H8Z" fill="#6c9a14" /><path d="M1 12C6 4 15 5 20 12C14 20 6 19 1 12Z" fill="#5a8a10" stroke="#24380a" /><path d="M6 12C9 8 14 9 16 12C13 15 9 15 6 12Z" fill="none" stroke="#24380a" />
        </svg>
      </button>
      <button aria-label="电池">
        <Svg><path d="M8 7H22V18H8Z" fill="currentColor" /><path d="M23.500 10V15M2 3V7M6 3V7M1 7H7V11H1ZM4 11V19H8" /></Svg>
      </button>
      <button aria-label="蓝牙" className="w-6 flex justify-center">
        <span className="w-[18px] h-6 rounded-full bg-[#1082f0] flex items-center justify-center"><FaBluetoothB className="w-4 h-4" /></span>
      </button>
      <button aria-label="安全删除硬件">
        <Svg><path d="M8 8V2H16V8M6 8H18V15M6 8V22H13M11 4V5M13 4V5M14 19L17 22L23 15" /></Svg>
      </button>
      <button aria-label="360">
        <svg viewBox="0 0 24 24" className="w-6 h-6" aria-hidden="true">
          <circle cx="12" cy="12" r="12" fill="#f1c62b" /><path d="M12 0A12 12 0 0 1 23 16L17 9L7 6L2 6A12 12 0 0 1 12 0Z" fill="#2aa63c" />
          <circle cx="12" cy="12" r="8" fill="#fbe04c" /><path d="M12 6V18M6 12H18" stroke="#1d9430" strokeWidth="3.500" />
        </svg>
      </button>
      <button aria-label="音量">
        <Svg><path d="M2 9H6L11 3V21L6 15H2ZM14 9C15.500 11 15.500 13 14 15" /><path d="M17 6C20 10 20 14 17 18M20 3C24 9 24 15 20 21" stroke="#777" /></Svg>
      </button>
      <button className="w-5 text-lg leading-6">中</button>
      <button aria-label="QQ浏览器" className="ml-[10px]">
        <svg viewBox="0 0 24 24" className="w-6 h-6" aria-hidden="true">
          <rect width="24" height="24" rx="4" fill="#3c8bf2" /><circle cx="12" cy="11.500" r="6" fill="none" stroke="#fff" strokeWidth="2.500" /><path d="M14 17L19 19" stroke="#8fe37c" strokeWidth="2.500" />
        </svg>
      </button>
    </div>
  );
}

function TaskBar() {
  return (
    <div className="relative h-[60px] shrink-0 bg-linear-to-r from-[#283345] from-65% to-[#232323] to-85% flex items-stretch whitespace-nowrap">
      <button aria-label="开始菜单" className="w-[72px] flex items-center justify-center">
        <svg viewBox="0 0 24 24" className="w-[25px] h-6 fill-white" aria-hidden="true">
          <path d="M0 3.500L10 2V11.500H0ZM11 1.800L24 0V11.500H11ZM0 12.500H10V22L0 20.500ZM11 12.500H24V24L11 22.200Z" />
        </svg>
      </button>
      <button aria-label="搜狗" className="w-[78px] flex items-center justify-center">
        <svg viewBox="0 0 34 34" className="w-[34px] h-[34px]" fill="#fff" stroke="#283345" strokeWidth="1.500" aria-hidden="true">
          <path d="M16 17C7 17 1 14 1 8C1 1 10 -1 15 2C12 7 13 12 17 17Z" />
          <path d="M17 17C12 11 13 3 20 1C30 -1 35 6 33 12C28 8 22 10 17 17Z" />
          <path d="M17 17C22 10 29 9 33 14C35 24 29 26 25 26C27 21 23 18 17 17Z" />
          <path d="M17 17C26 18 29 24 25 30C20 35 12 34 12 30C18 29 20 23 17 17Z" />
          <path d="M17 17C19 24 15 31 8 30C1 29 0 23 1 17C6 24 12 24 17 17Z" />
        </svg>
      </button>
      <form className="flex self-center h-[43px]" onSubmit={(e) => e.preventDefault()}>
        <label className="w-[205px] bg-[#f0f0f0] flex items-center pl-2">
          <BrowserE className="w-[22px] h-[22px] shrink-0" color="#2f8df0" ring="#6cbcf6" />
          <Caret up className="mx-[6px] scale-75" />
          <input aria-label="搜索" defaultValue="螺杆式冷水机组参数" className="w-[150px] text-[15px] text-black outline-none" />
        </label>
        <button className="w-[69px] bg-[#2388ff] text-white text-[15px]">搜索一下</button>
      </form>
      <span className="w-[6px] h-9 self-center ml-3 border-x border-[#475265]" />
      <button aria-label="IE 浏览器" className="w-[74px] ml-[16px] flex items-center justify-center">
        <BrowserE className="w-[34px] h-[34px]" color="#4ab8ee" ring="#f0c83c" />
      </button>
      <button aria-label="安全浏览器" className="w-[76px] mr-[5px] flex items-center justify-center">
        <svg viewBox="0 0 36 36" className="w-9 h-9" aria-hidden="true">
          <circle cx="18" cy="19" r="14.500" fill="#5ac02c" stroke="#e0f8d4" strokeWidth="2.500" />
          <path d="M11 20H25A7 7 0 1 0 23 25" fill="none" stroke="#fff" strokeWidth="4" />
          <path d="M2 35C6 36 11 33 15 30M20 5C24 3 30 1 33 3" stroke="#5ac02c" strokeWidth="2.500" fill="none" />
        </svg>
      </button>
      <button aria-label="文件资源管理器" className="w-[62px] mr-[13px] border-b-4 border-[#76b4e8] flex items-center justify-center">
        <svg viewBox="0 0 34 28" className="w-[34px] h-7 mt-1" aria-hidden="true">
          <path d="M0 1H13L15 4H34V26H0Z" fill="#f7d06a" /><path d="M0 1H13L15 4H0Z" fill="#dfa42c" />
          <path d="M7 28V15H27V28H22V20H12V28Z" fill="#3e8fd6" />
        </svg>
      </button>
      <button aria-label="猫影" className="w-[61px] mr-2 border-b-4 border-[#76b4e8] flex items-center justify-center">
        <Ninja className="w-9 h-9 mt-1" back="#e8701c" />
      </button>
      <button aria-label="WPS Office" className="w-[73px] bg-[#515b69] border-b-4 border-[#76b4e8] flex items-center justify-center">
        <svg viewBox="0 0 36 28" className="w-9 h-7 mt-1" aria-hidden="true">
          <path d="M0 0H13L15 5H9L13 17L17 5L20 0H27L14 28H10Z" fill="#ee2f1f" />
          <path d="M27 0H36L25 28H21L17 19L20 12L23 18L28 5H22Z" fill="#f0461f" />
          <path d="M20 0H27L16 24L12 16Z" fill="#ff7a2c" />
        </svg>
      </button>

      <div className="ml-auto flex items-center text-white">
        <button className="relative flex items-center text-xl">
          <svg viewBox="0 0 36 34" className="w-9 h-[34px] mr-3" aria-hidden="true">
            <path d="M12 1C13 9 8 14 1 13C3 21 14 22 18 15C21 9 18 3 12 1Z" fill="#f6c32c" />
            <path d="M10 32A6.500 6.500 0 0 1 9 19A9 9 0 0 1 26 17A7.500 7.500 0 0 1 29 32Z" fill="#d8e4f6" />
          </svg>
          <span className="absolute left-[54px] -top-[10px] flex flex-col items-center text-lg leading-6 text-[#c65561]">
            <span>84℃</span>
            <span>CPU温度</span>
          </span>
          <span className="relative w-[62px] text-left">28°C</span>
          <span className="relative -mr-3">多云</span>
        </button>
        <Tray />
        <button className="ml-[29px] w-[88px] text-lg leading-6 text-center">
          20:42 周日
          <br />
          2022/9/18
        </button>
        <button aria-label="操作中心" className="relative ml-8 w-6 h-[23px] bg-white mr-[26px]">
          <svg viewBox="0 0 24 23" className="w-6 h-[23px]" aria-hidden="true"><path d="M9 7L17 12L9 17Z" fill="#222" /></svg>
          <span className="absolute left-4 top-[11px] w-5 h-5 bg-[#e01010] text-sm leading-5">11</span>
        </button>
      </div>
      <span className="absolute -right-1 bottom-[7px] text-lg leading-6 text-[#a9a9a9]/90 font-['Liberation_Sans']">
        CSDN @QQ3295391197
      </span>
    </div>
  );
}

export default function App() {
  return (
    <div className="h-screen bg-black px-[21px] font-['Open_Sans','Noto_Sans_CJK_SC',sans-serif]">
      <div className="relative h-full flex flex-col bg-white">
        <TitleBar />
        <MenuBar />
        <Ribbon />
        <div className="flex-1 min-h-0 flex bg-[#f6f7fb]">
          <Document />
          <ScrollBar />
          <SideBar />
        </div>
        <StatusBar />
        <TaskBar />
        <div className="absolute left-[3px] top-2 w-3 h-[87px] rounded-md overflow-hidden flex flex-col">
          <span className="flex-1 bg-[#293c70]" />
          <span className="h-8 bg-[#66676b]" />
          <span className="h-[18px] bg-[repeating-linear-gradient(to_bottom,#4f8a5c_0px,#4f8a5c_2px,#66766a_2px,#66766a_4px)]" />
        </div>
        <svg viewBox="0 0 14 20" className="absolute right-[65px] top-[519px] w-[14px] h-5" aria-hidden="true">
          <path d="M1 1V16L5 12L8 18.500L10.500 17L8 11H13Z" fill="#fff" stroke="#111" />
        </svg>
      </div>
    </div>
  );
}
